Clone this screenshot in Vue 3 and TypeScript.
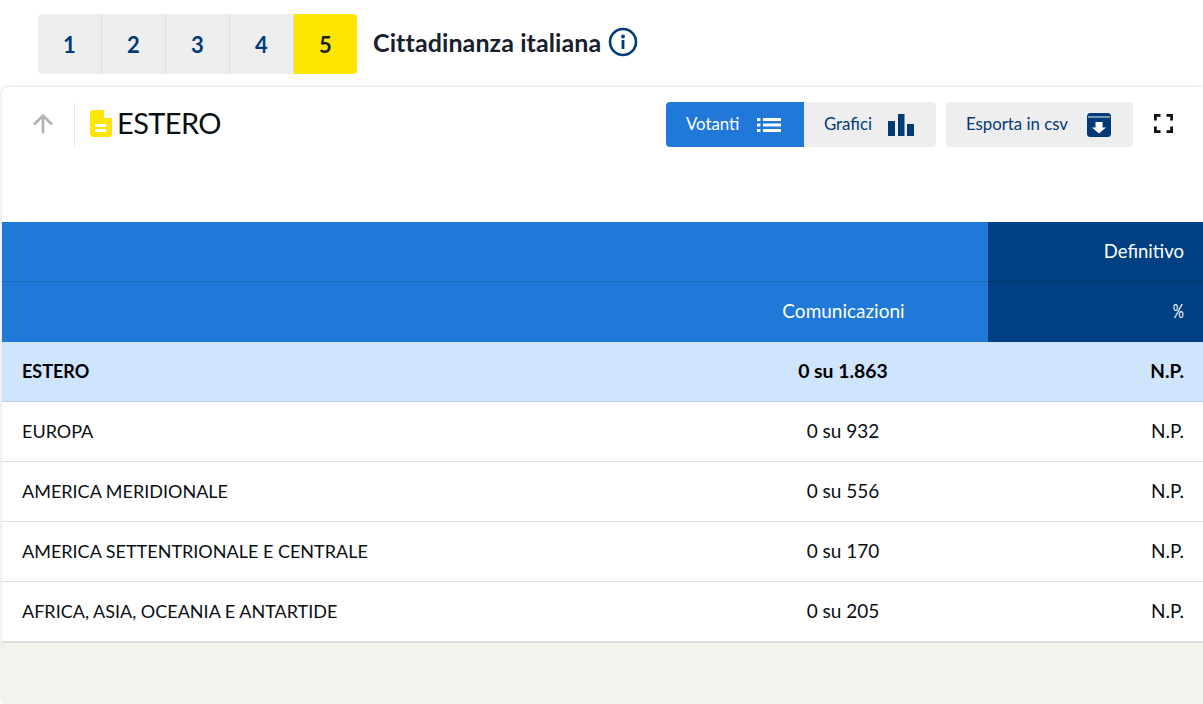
<script setup lang="ts">
const tabs: string[] = ['1', '2', '3', '4', '5']
interface Row { name: string; comm: string; pct: string; total?: boolean }
const rows: Row[] = [
  { name: 'ESTERO', comm: '0 su 1.863', pct: 'N.P.', total: true },
  { name: 'EUROPA', comm: '0 su 932', pct: 'N.P.' },
  { name: 'AMERICA MERIDIONALE', comm: '0 su 556', pct: 'N.P.' },
  { name: 'AMERICA SETTENTRIONALE E CENTRALE', comm: '0 su 170', pct: 'N.P.' },
  { name: 'AFRICA, ASIA, OCEANIA E ANTARTIDE', comm: '0 su 205', pct: 'N.P.' },
]
</script>

<template>
  <div class="page">
    <div class="steps">
      <div class="tabs">
        <button v-for="t in tabs" :key="t" class="tab" :class="{ active: t === '5' }">{{ t }}</button>
      </div>
      <h2 class="step-title">Cittadinanza italiana</h2>
      <svg class="info" width="30" height="30" viewBox="0 0 30 30">
        <circle cx="15" cy="15" r="13" fill="none" stroke="#003b78" stroke-width="2.6" />
        <circle cx="15" cy="9.500" r="1.900" fill="#003b78" />
        <path d="M15 13v9" fill="none" stroke="#003b78" stroke-width="2.800" />
      </svg>
    </div>

    <section class="card">
      <header class="head">
        <svg class="up" width="22" height="22" viewBox="0 0 22 22">
          <path d="M11 20.5V3M2 11.5L11 2.5l9 9" fill="none" stroke="#b3b3b3" stroke-width="2.6" />
        </svg>
        <span class="sep"></span>
        <svg class="doc" width="22" height="27" viewBox="0 0 22 27">
          <path d="M3 0h10.5L22 8.5V24a3 3 0 0 1-3 3H3a3 3 0 0 1-3-3V3a3 3 0 0 1 3-3z" fill="#ffe600" />
          <path d="M14 0.5V8h7.5z" fill="#fff" />
          <path d="M5 14h11v3H5zM5 19h11v3H5z" fill="#fff" />
        </svg>
        <h1 class="title">ESTERO</h1>
        <div class="actions">
          <div class="group">
            <button class="btn on">
              <span>Votanti</span>
              <svg width="24" height="14" viewBox="0 0 24 14">
                <path d="M0 0h3.4v3H0zM0 5.5h3.4v3H0zM0 11h3.4v3H0zM6 0h18v3H6zM6 5.5h18v3H6zM6 11h18v3H6z" fill="#fff" />
              </svg>
            </button>
            <button class="btn g2">
              <span>Grafici</span>
              <svg width="26" height="22" viewBox="0 0 26 22">
                <path d="M0 7h7v15H0zM10 0h6.500v22H10zM19 10h7v12h-7z" fill="#003b78" />
              </svg>
            </button>
          </div>
          <button class="btn csv">
            <span>Esporta in csv</span>
            <svg width="24" height="24" viewBox="0 0 24 24">
              <rect x="0" y="0" width="24" height="24" rx="3.500" fill="#003b78" />
              <path d="M1 4h22" stroke="#eee" stroke-width="1" />
              <path d="M8.500 9h7v5.500h3.500L12 20.500 5 14.500h3.500z" fill="#fff" />
            </svg>
          </button>
          <svg class="full" width="19" height="19" viewBox="0 0 19 19">
            <path d="M1.400 6.500V1.400H6.500M12.500 1.400h5.100V6.500M17.600 12.500v5.100H12.500M6.500 17.600H1.400V12.500" fill="none" stroke="#111" stroke-width="2.800" />
          </svg>
        </div>
      </header>

      <table class="data">
        <thead>
          <tr>
            <th></th>
            <th></th>
            <th class="dark">Definitivo</th>
          </tr>
          <tr>
            <th></th>
            <th class="mid">Comunicazioni</th>
            <th class="dark"><span class="pct">%</span></th>
          </tr>
        </thead>
        <tbody>
          <tr v-for="r in rows" :key="r.name" :class="{ total: r.total }">
            <td>{{ r.name }}</td>
            <td class="mid">{{ r.comm }}</td>
            <td class="end">{{ r.pct }}</td>
          </tr>
        </tbody>
      </table>
      <div class="foot"></div>
    </section>
  </div>
</template>

<style scoped>
.page {
  width: 1203px;
  height: 704px;
  overflow: hidden;
  box-sizing: border-box;
  padding: 14px 0 0 2px;
  font-family: Lato, "Open Sans", sans-serif;
  color: #111;
}
.steps {
  display: flex;
  align-items: center;
  height: 60px;
  padding-left: 36px;
}
.tabs {
  display: flex;
  border-radius: 4px;
  overflow: hidden;
}
.tab {
  width: 64px;
  height: 60px;
  border: 0;
  border-right: 1px solid #dcdcdc;
  background: #eeeeee;
  color: #003b78;
  font: 700 22px Lato, sans-serif;
  padding: 0;
}
.tab.active {
  background: #ffe600;
  color: #17212e;
  border-right: 0;
  width: 63px;
}
.step-title {
  margin: 0 0 0 16px;
  font-size: 25px;
  font-weight: 700;
  letter-spacing: 0.1px;
  color: #17212e;
  position: relative;
  top: -2px;
}
.info {
  margin-left: 7px;
  position: relative;
  top: -2px;
}
.card {
  margin-top: 13px;
  height: 617px;
  background: #fff;
  border-radius: 6px 0 0 6px;
  box-shadow: 0 0 4px rgba(0, 0, 0, 0.18);
  overflow: hidden;
  display: flex;
  flex-direction: column;
}
.head {
  height: 135px;
  flex: none;
  box-sizing: border-box;
  padding: 15px 0 0 30px;
  display: flex;
  align-items: flex-start;
}
.up {
  margin-top: 11px;
}
.sep {
  width: 1px;
  height: 43px;
  background: #e3e3e3;
  margin: 1px 15px 0 20px;
}
.doc {
  margin-top: 8px;
}
.title {
  margin: 1px 0 0 5px;
  font-size: 29px;
  font-weight: 400;
  line-height: 40px;
  letter-spacing: -0.6px;
  color: #0a0f14;
}
.actions {
  margin-left: auto;
  display: flex;
  align-items: flex-start;
}
.group {
  display: flex;
  border-radius: 4px;
  overflow: hidden;
}
.btn {
  height: 45px;
  border: 0;
  display: flex;
  align-items: center;
  justify-content: space-between;
  box-sizing: border-box;
  padding: 0 20px;
  font: 400 16.8px Lato, sans-serif;
  background: #eeeeee;
  color: #003b78;
}
.btn span {
  position: relative;
  top: -1px;
}
.btn.on {
  width: 138px;
  background: #2079d8;
  color: #fff;
  padding-right: 23px;
}
.btn.g2 {
  width: 132px;
  padding-right: 22px;
}
.btn.csv {
  width: 187px;
  margin-left: 10px;
  border-radius: 4px;
  padding-right: 22px;
}
.full {
  margin: 12px 30px 0 21px;
}
.data {
  width: 100%;
  flex: none;
  border-collapse: separate;
  border-spacing: 0;
  table-layout: fixed;
  font-size: 18px;
}
.data th,
.data td {
  height: 60px;
  padding: 0 20px 2px;
  box-sizing: border-box;
}
.data th:first-child,
.data td:first-child {
  width: 696px;
  text-align: left;
}
.data th:nth-child(2),
.data td:nth-child(2) {
  width: 290px;
  font-size: 19px;
}
.data th {
  background: #2079d8;
  color: #fff;
  font-weight: 400;
  font-size: 18.500px;
  text-align: right;
  border-bottom: 1px solid #1b69bb;
  padding-right: 19px;
}
.data th.dark {
  background: #003f82;
  border-bottom-color: #003668;
}
.data thead tr:last-child th {
  border-bottom: 0;
  padding-bottom: 3px;
}
.pct {
  display: inline-block;
  transform: scaleX(0.75);
  transform-origin: right center;
}
.data th.mid,
.data td.mid {
  text-align: center;
}
.data td {
  border-bottom: 1px solid #dddddd;
  color: #0a0f14;
}
.data td.end {
  text-align: right;
  padding-right: 19px;
  font-size: 19px;
}
.data tr.total td {
  background: #cfe4fd;
  font-weight: 700;
  color: #000;
  border-bottom-color: #b9cfe8;
}
.data tr.total td.mid {
  font-size: 19.400px;
}
.data tbody tr:last-child td {
  height: 61px;
  border-bottom: 2px solid #dddddd;
}
.foot {
  flex: 1;
  background: #f3f3ee;
}
</style>
